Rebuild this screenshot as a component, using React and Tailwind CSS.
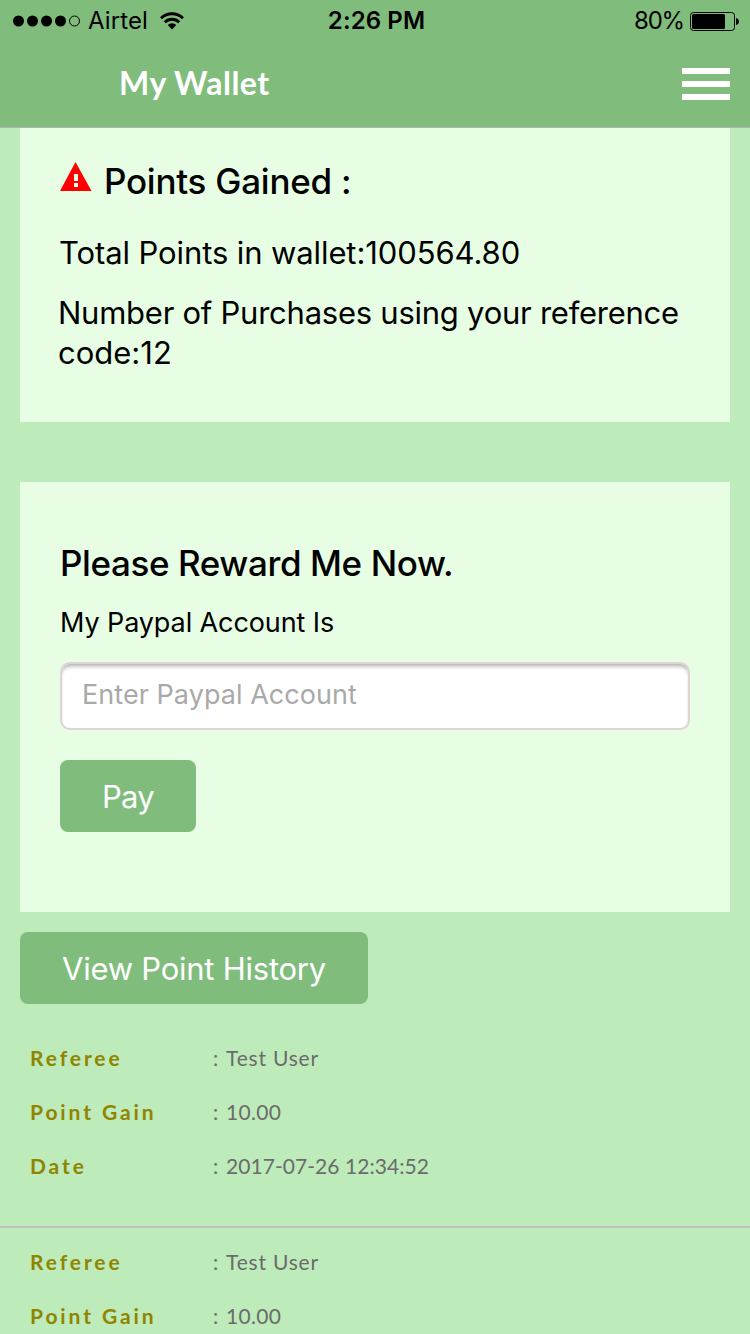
import React, { useState } from 'react';

const history = [
  { referee: 'Test User', points: '10.00', date: '2017-07-26 12:34:52' },
  { referee: 'Test User', points: '10.00' },
];

function StatusBar() {
  return (
    <div className="grid grid-cols-3 items-center h-10 pt-px text-2xl leading-10 pl-[13px] pr-[11px]">
      <div className="flex items-center">
        <svg width="68" height="12" viewBox="0 0 68 12" className="shrink-0">
          <circle cx="5.5" cy="6" r="5.5" />
          <circle cx="19.5" cy="6" r="5.5" />
          <circle cx="33.5" cy="6" r="5.5" />
          <circle cx="47.5" cy="6" r="5.5" />
          <circle cx="61.5" cy="6" r="5" fill="none" stroke="#000" />
        </svg>
        <span className="ml-[7px] w-[60px] whitespace-nowrap tracking-[0.1px]">Airtel</span>
        <svg width="24" height="18" viewBox="0 0 24 18" className="ml-3 shrink-0">
          <g fill="none" stroke="#000" strokeWidth="2.9">
            <path d="M1 6.3A15.7 15.7 0 0 1 23 6.3" />
            <path d="M4.8 10.2A10.3 10.3 0 0 1 19.2 10.2" />
          </g>
          <path d="M7.7 13A6.1 6.1 0 0 1 16.3 13L12 17.5Z" />
        </svg>
      </div>
      <div className="pl-px text-center font-semibold whitespace-nowrap tracking-[0.1px]">2:26 PM</div>
      <div className="flex items-center justify-end">
        <span className="mr-[6px] whitespace-nowrap tracking-[-1.2px]">80%</span>
        <svg width="49" height="19" viewBox="0 0 49 19" className="shrink-0">
          <rect x="0.5" y="0.5" width="44" height="18" rx="3" fill="none" stroke="#000" />
          <rect x="2" y="2" width="33" height="15" rx="1.5" />
          <path d="M46 6C48 6.5 49 8 49 9.5S48 12.5 46 13Z" />
        </svg>
      </div>
    </div>
  );
}

function Header() {
  return (
    <header className="h-32 bg-[#80bd7d] border-b border-[#b2b2b2]">
      <StatusBar />
      <div className="flex items-center justify-between h-[87px] pl-[119px] pr-5">
        <h1 className="pb-[2px] font-[Lato,sans-serif] font-bold text-[32px] text-white tracking-[0.5px]">
          My Wallet
        </h1>
        <button type="button" aria-label="Menu" className="flex flex-col gap-[7px] mt-px">
          <span className="w-12 h-[6px] bg-white" />
          <span className="w-12 h-[6px] bg-white" />
          <span className="w-12 h-[6px] bg-white" />
        </button>
      </div>
    </header>
  );
}

function PointsCard() {
  return (
    <section className="h-[294px] bg-[#e7fee4] px-[39px] pt-[33px]">
      <h2 className="flex text-[35px] leading-10 font-medium">
        <svg width="32" height="30" viewBox="0 0 32 30" className="ml-px mt-px mr-3 shrink-0">
          <path d="M15.5 0L31.5 29H0Z" fill="#f00" />
          <path d="M14 12h4v7h-4zM14 21h4v4h-4z" fill="#e7fee4" />
        </svg>
        <span className="whitespace-nowrap tracking-[-0.25px]">Points Gained :</span>
      </h2>
      <p className="mt-8 text-[31px] leading-10 whitespace-nowrap tracking-[-0.1px]">
        Total Points in wallet:100564.80
      </p>
      <p className="-ml-px mt-5 text-[31px] leading-10 whitespace-nowrap tracking-[-0.25px]">
        Number of Purchases using your reference
        <br />
        <span className="tracking-normal">code:12</span>
      </p>
    </section>
  );
}

function RewardForm() {
  const [account, setAccount] = useState('');

  return (
    <form
      onSubmit={ev => ev.preventDefault()}
      className="mt-[60px] h-[430px] bg-[#e7fee4] px-10 pt-[61px]"
    >
      <h2 className="text-[35px] leading-10 font-medium whitespace-nowrap tracking-[-0.4px]">
        Please Reward Me Now.
      </h2>
      <label htmlFor="account" className="block mt-5 text-[27px] leading-10 whitespace-nowrap tracking-[-0.1px]">
        My Paypal Account Is
      </label>
      <input
        id="account"
        type="text"
        autoComplete="off"
        placeholder="Enter Paypal Account"
        className="block mt-[19px] w-full h-[68px] rounded-[10px] border-2 border-[#ddd5d3] bg-white px-5 pb-[3px] text-[27px] tracking-[0.05px] placeholder:text-[#a9a9a9] shadow-[inset_0_4px_4px_-2px_#aaaaaa]"
        value={account}
        onChange={ev => setAccount(ev.currentTarget.value)}
      />
      <button
        type="submit"
        className="mt-[30px] w-[136px] h-[72px] rounded-lg bg-[#80bd7d] pt-[3px] text-[31px] text-white tracking-[-0.7px]"
      >
        Pay
      </button>
    </form>
  );
}

function HistoryRow({ label, value, valueClass = 'tracking-[0.3px]' }) {
  return (
    <div className="flex h-[54px] items-center font-[Lato,sans-serif] text-[21px]">
      <dt className="w-[183px] font-bold text-[#908400] tracking-[2.9px]">{label}</dt>
      <dd className="flex text-[#6b6b6b]">
        <span className="w-[13px]">:</span>
        <span className={valueClass}>{value}</span>
      </dd>
    </div>
  );
}

function App() {
  return (
    <div className="h-[1334px] overflow-hidden bg-[#bdebba] font-[Inter,sans-serif] text-black">
      <Header />
      <main>
        <div className="px-5">
          <PointsCard />
          <RewardForm />
          <button
            type="button"
            className="block mt-5 w-[348px] h-[72px] rounded-lg bg-[#80bd7d] pt-[3px] text-[31px] text-white whitespace-nowrap tracking-[-0.25px]"
          >
            View Point History
          </button>
        </div>
        <div className="mt-5">
          {history.map((item, i) => (
            <dl key={i} className="h-[204px] px-[30px] pt-[7px] border-b-2 border-[#c0c0c0]">
              <HistoryRow label="Referee" value={item.referee} valueClass="tracking-[0.8px]" />
              <HistoryRow label="Point Gain" value={item.points} />
              {item.date && (
                <HistoryRow label="Date" value={item.date} valueClass="tracking-[0.05px]" />
              )}
            </dl>
          ))}
        </div>
      </main>
    </div>
  );
}

export default App;
